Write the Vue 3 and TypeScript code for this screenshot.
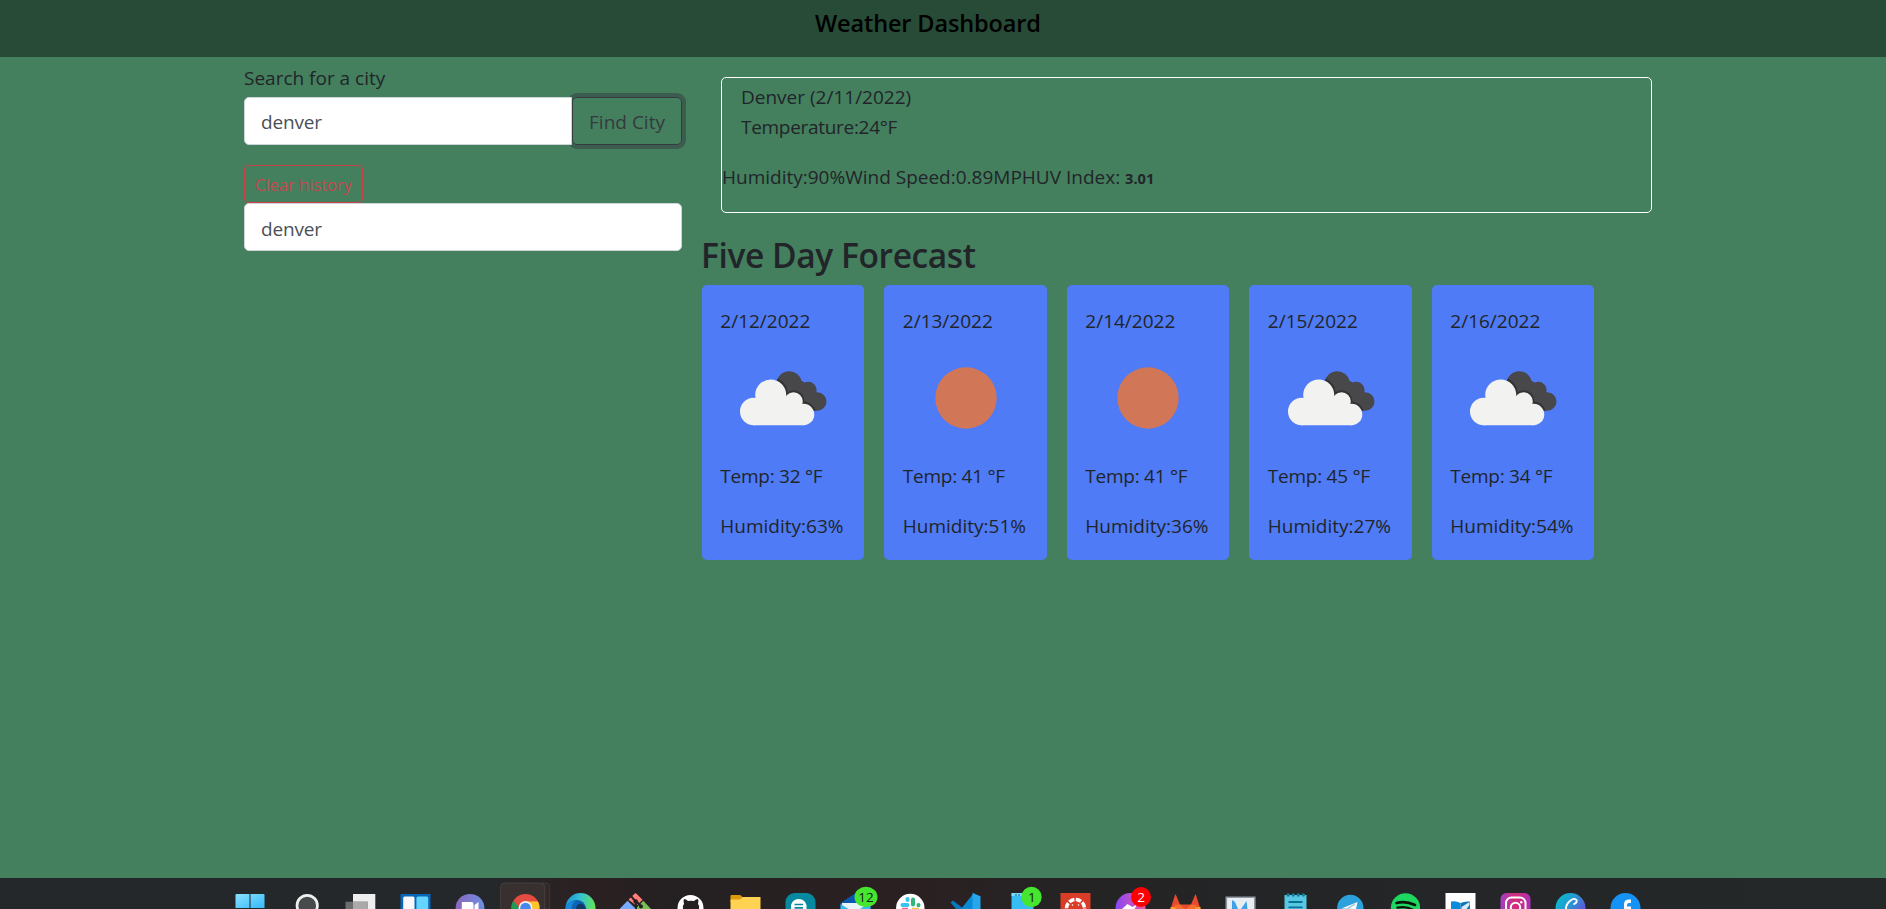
<script setup lang="ts">
import { ref } from 'vue'

interface Day {
  date: string
  icon: 'clouds' | 'sun'
  temp: number
  humidity: number
}

const city = ref('denver')
const history = ref<string[]>(['denver'])
const days: Day[] = [
  { date: '2/12/2022', icon: 'clouds', temp: 32, humidity: 63 },
  { date: '2/13/2022', icon: 'sun', temp: 41, humidity: 51 },
  { date: '2/14/2022', icon: 'sun', temp: 41, humidity: 36 },
  { date: '2/15/2022', icon: 'clouds', temp: 45, humidity: 27 },
  { date: '2/16/2022', icon: 'clouds', temp: 34, humidity: 54 },
]
</script>

<template>
  <div class="page">
    <header class="navbar"><h5>Weather Dashboard</h5></header>
    <main class="container">
      <aside class="search">
        <label for="city">Search for a city</label>
        <div class="group">
          <input id="city" v-model="city" class="field" type="text" />
          <button class="find" type="button">Find City</button>
        </div>
        <button class="clear" type="button" @click="history = []">Clear history</button>
        <div v-for="item in history" :key="item" class="field past">{{ item }}</div>
      </aside>
      <section class="results">
        <article class="today">
          <p class="line">Denver (2/11/2022)</p>
          <p class="line">Temperature:24°F</p>
          <p class="details">Humidity:90%Wind Speed:0.89MPHUV Index: <b>3.01</b></p>
        </article>
        <h3>Five Day Forecast</h3>
        <div class="forecast">
          <article v-for="day in days" :key="day.date" class="day">
            <p>{{ day.date }}</p>
            <svg v-if="day.icon === 'clouds'" class="weather" viewBox="0 0 125 125">
              <defs>
                <clipPath id="rear">
                  <circle cx="69.300" cy="48" r="12.800" /><circle cx="88.300" cy="54" r="8.300" />
                  <circle cx="97.200" cy="65.500" r="9.300" /><path d="M58 45h24l10 6 5 23.800H62z" />
                </clipPath>
              </defs>
              <g clip-path="url(#rear)">
                <path d="M50 30h60v50H50z" fill="#48484a" />
                <g fill="#333335">
                  <circle cx="51" cy="58" r="16.800" /><circle cx="73.800" cy="64.700" r="10.400" />
                  <circle cx="83.700" cy="77.600" r="12" />
                </g>
              </g>
              <g fill="#f2f2f1">
                <circle cx="33.700" cy="75.500" r="13.700" /><circle cx="50.700" cy="59" r="15.500" />
                <circle cx="73.500" cy="65.500" r="9.300" /><circle cx="83.600" cy="78.500" r="10.700" />
                <path d="M33 62h12l30 4 9 12v11.200H33z" />
              </g>
            </svg>
            <svg v-else class="weather" viewBox="0 0 125 125"><circle cx="63" cy="62" r="30.700" fill="#d27658" /></svg>
            <p class="temp">Temp: {{ day.temp }} °F</p>
            <p>Humidity:{{ day.humidity }}%</p>
          </article>
        </div>
      </section>
    </main>

    <footer class="taskbar">
      <!-- Start -->
      <svg viewBox="0 0 55 31"><defs><linearGradient id="win" x2="1" y2="1"><stop stop-color="#8be0ff" /><stop offset="1" stop-color="#35b9fb" /></linearGradient></defs><path d="M12.500 17q0-1 1-1h13v14h-14zM27.500 16h13q1 0 1 1v13h-14z" fill="url(#win)" /></svg>
      <!-- Search -->
      <svg viewBox="0 0 55 31"><circle cx="29.200" cy="27.500" r="10.200" fill="#484b4b" stroke="#f0f0f0" stroke-width="2.700" /></svg>
      <!-- Task view -->
      <svg viewBox="0 0 55 31"><path d="M20 16h22.300v15H20z" fill="#eee" /><path d="M12.500 23.700h22.300V31H12.500z" fill="#6c6d6d" /><path d="M20 23.700h14.800V31H20z" fill="#aaa" /></svg>
      <!-- Widgets -->
      <svg viewBox="0 0 55 31"><path d="M12.500 16h30v15h-30z" fill="#0867b6" /><rect x="15.200" y="18.600" width="11.300" height="17" rx="1.500" fill="#f8f8fa" /><rect x="28.400" y="18.600" width="11.800" height="17" rx="1.500" fill="#65d5ff" /></svg>
      <!-- Chat -->
      <svg viewBox="0 0 55 31"><defs><linearGradient id="chat" x2="1"><stop stop-color="#8a67bd" /><stop offset="1" stop-color="#6e8ee0" /></linearGradient></defs><circle cx="27" cy="30.300" r="14.400" fill="url(#chat)" /><path d="M18.800 24h10q1.700 0 1.700 2v5H18.800zM31.500 27l4-3v7h-4z" fill="#fff" /></svg>
      <!-- Chrome -->
      <svg viewBox="0 0 55 31"><path d="M44 5h3q4.700 0 4.700 4v22h-5z" fill="#302928" stroke="#49403f" stroke-width=".7" /><path d="M2.700 31V9q0-4 4-4h36q4 0 4 4v22" fill="#382f2f" stroke="#514847" stroke-width=".7" /><circle cx="27.500" cy="30" r="14" fill="#e44c3f" /><path d="M15.500 22.500q-4 6-.8 12H24l-3-5z" fill="#209b54" /><path d="M28 23.500h12q2.500 5 1 9H33z" fill="#fec52f" /><circle cx="27.500" cy="30" r="6.900" fill="#f2f4f7" /><circle cx="27.500" cy="30" r="5.300" fill="#4688ee" /></svg>
      <!-- Edge -->
      <svg viewBox="0 0 55 31"><defs><linearGradient id="edge" x2="1" y2=".3"><stop stop-color="#188fd9" /><stop offset=".5" stop-color="#36c1d0" /><stop offset="1" stop-color="#60e45a" /></linearGradient></defs><circle cx="27.500" cy="30" r="15" fill="url(#edge)" /><path d="M13 28q4-6 10.500-6 8 0 10 9H12.500z" fill="#0c62b5" /><path d="M23 31q0-5 5-5.500 4 1 4.500 5.500z" fill="#123b69" /><path d="M12.500 31q1-8 10-8-4 3-4 8z" fill="#168ad9" /></svg>
      <!-- Git -->
      <svg viewBox="0 0 55 31"><path d="M20.500 21.700l6-6q1-1 2 0l6 6-6 6z" fill="#ff7e7b" /><path d="M19.500 22.700l8.500 8.300H11.500z" fill="#78aaff" /><path d="M35.300 22.700L43 31H27.500z" fill="#79bf56" /><path d="M23 18l5 6v7M27 22l6 6" fill="none" stroke="#272021" stroke-width="2" /><circle cx="27.700" cy="23.500" r="2.300" fill="#272021" /><circle cx="33" cy="28.500" r="2" fill="#272021" /></svg>
      <!-- GitHub -->
      <svg viewBox="0 0 55 31"><circle cx="27.500" cy="30" r="13" fill="#fff" /><path d="M20 31q-1-3 1-5-1-3 0-5 2 0 4 2 3-.7 6 0 2-2 4-2 1 2 0 5 2 2 1 5z" fill="#242022" /></svg>
      <!-- Explorer -->
      <svg viewBox="0 0 55 31"><path d="M12.500 24v-6q0-1 1-1h8q1 0 2 1l2 2v4z" fill="#dc9b0b" /><path d="M12.500 21.500H22l3-2.500h17.500v12h-30z" fill="#ffd252" /></svg>
      <!-- Notes chat -->
      <svg viewBox="0 0 55 31"><rect x="12.500" y="15" width="30" height="30" rx="9" fill="#078a9f" /><path d="M18 31a8 8 0 1 1 15.500 0z" fill="#fff" /><path d="M21.500 26.500H30M21.500 29.800H30" stroke="#078a9f" stroke-width="1.700" /></svg>
      <!-- Mail -->
      <svg viewBox="0 0 55 31"><path d="M12.500 25L27 15.500 42.500 25v6h-30z" fill="#0858ad" /><path d="M14 25h28v6H14z" fill="#e9f4fa" /><path d="M12.500 26l8 5h-8zM42.500 24v7H32z" fill="#35b9ef" /><ellipse cx="38" cy="19" rx="11.500" ry="10.200" fill="#46e52f" /><text x="38" y="23.500" class="badge">12</text></svg>
      <!-- Slack -->
      <svg viewBox="0 0 55 31"><circle cx="27.300" cy="30" r="14.200" fill="#fff" /><g fill="none" stroke-linecap="round" stroke-width="4"><path d="M24.500 21v1M19.500 27h5" stroke="#36c5f0" /><path d="M30 21.500v5M35.500 27v.2" stroke="#2eb67d" /></g><path d="M19 30.300h6" stroke="#e5396d" /><path d="M29 30.300h7" stroke="#ecb22e" /></svg>
      <!-- VS Code -->
      <svg viewBox="0 0 55 31"><path d="M12.500 24.500l2.500-2 11 8.500h-8z" fill="#0878bd" /><path d="M23 31l12-15 1.500-1V31z" fill="#098bd4" /><path d="M34.500 15l8 3.300V31h-8z" fill="#27a6ed" /></svg>
      <!-- Calendar -->
      <svg viewBox="0 0 55 31"><path d="M18.500 15h22v16h-22z" fill="#36bdf4" /><path d="M18.500 15h22v3h-22z" fill="#70dbff" /><path d="M22 17h6" stroke="#195c79" stroke-dasharray="2 1" /><circle cx="38.500" cy="19" r="10.200" fill="#46e52f" /><text x="38.800" y="23.500" class="badge">1</text></svg>
      <!-- Canvas -->
      <svg viewBox="0 0 55 31"><path d="M12.500 15h30v16h-30z" fill="#d93d28" /><circle cx="27.500" cy="30.500" r="9" fill="none" stroke="#fff" stroke-width="3.500" stroke-dasharray="5.600 1.470" /><circle cx="24.500" cy="27" r=".8" fill="#fff" /><circle cx="30.500" cy="27" r=".8" fill="#fff" /></svg>
      <!-- Messenger -->
      <svg viewBox="0 0 55 31"><defs><linearGradient id="msg" x2="1" y2="0"><stop stop-color="#8747f7" /><stop offset="1" stop-color="#ed59a1" /></linearGradient></defs><circle cx="27.500" cy="30" r="15" fill="url(#msg)" /><path d="M19 31l5.500-5 5 3 5-3-3 5z" fill="#fff" /><circle cx="38" cy="19" r="10" fill="#f00" /><text x="38" y="23.500" class="badge light">2</text></svg>
      <!-- GitLab -->
      <svg viewBox="0 0 55 31"><path d="M12.500 31l4.500-14q.5-1.500 1 0l4 9.500h11l4-9.500q.5-1.500 1 0l4.500 14z" fill="#e64a2f" /><path d="M12.500 29l4 0L27.500 31l11-2 4 0v2h-30z" fill="#fb9c2b" /><path d="M16 27l6-.5 5 4.500h-9zM39 27l-6-.5-5 4.500h9z" fill="#f66d2b" /></svg>
      <!-- Chart -->
      <svg viewBox="0 0 55 31"><path d="M13.300 31V19.300h28.500V31" fill="#e8edf2" stroke="#8d98a3" stroke-width="1.600" /><path d="M19 31v-9l3 2 3 7zM28 31l5.500-8 1 8z" fill="#40a2e5" /></svg>
      <!-- Notepad -->
      <svg viewBox="0 0 55 31"><path d="M16.500 17h22v14h-22z" fill="#58c7e3" /><path d="M20.500 24h14M20.500 29.300h14" stroke="#087397" stroke-width="1.800" /><g fill="#167f9e"><circle v-for="n in 4" :key="n" :cx="15 + n * 5.100" cy="17" r="1.700" /></g></svg>
      <!-- Telegram -->
      <svg viewBox="0 0 55 31"><circle cx="27.300" cy="30" r="13.200" fill="#2ba1de" /><path d="M18.500 30.500L34.500 24l-1.500 7z" fill="#fff" /><path d="M24 31l8-5" stroke="#a9ccdf" stroke-width="1.500" /></svg>
      <!-- Spotify -->
      <svg viewBox="0 0 55 31"><circle cx="27.500" cy="29.800" r="14.600" fill="#1ed760" /><g fill="none" stroke="#06140a" stroke-linecap="round"><path d="M18.500 25q9-2.500 18.500 2" stroke-width="2.700" /><path d="M19.500 29.700q8-2 15.500 2" stroke-width="2.300" /></g></svg>
      <!-- Reader -->
      <svg viewBox="0 0 55 31"><path d="M12.500 15h30v16h-30z" fill="#fff" /><path d="M18 23.500q5-1 9.500 1.500v6H18z" fill="#078cdc" /><path d="M27.500 25q4-2 9.500-1.500V31h-9.500z" fill="#1275b3" /><path d="M28.500 31v-2l8-5v3l-3 4z" fill="#d8edf9" /></svg>
      <!-- Instagram -->
      <svg viewBox="0 0 55 31"><defs><linearGradient id="insta" x2="1"><stop stop-color="#a33fc2" /><stop offset=".5" stop-color="#d72c77" /><stop offset="1" stop-color="#ac30b6" /></linearGradient></defs><rect x="12.500" y="15" width="30" height="30" rx="6" fill="url(#insta)" /><g fill="none" stroke="#fff" stroke-width="2"><rect x="18" y="19.500" width="19.500" height="19.500" rx="5.500" /><circle cx="27.500" cy="29.500" r="4.700" /></g><circle cx="33.300" cy="24.200" r="1.200" fill="#fff" /></svg>
      <!-- Canva -->
      <svg viewBox="0 0 55 31"><defs><linearGradient id="canva" x2="1" y2=".7"><stop stop-color="#02c4cc" /><stop offset=".5" stop-color="#2798d2" /><stop offset="1" stop-color="#7145dc" /></linearGradient></defs><circle cx="27.500" cy="30" r="15" fill="url(#canva)" /><path d="M31 26q3.500-1.500 2.500-4-2-2.500-6 .5-5 4-4.500 9" fill="none" stroke="#fff" stroke-width="1.900" stroke-linecap="round" /></svg>
      <!-- Facebook -->
      <svg viewBox="0 0 55 31"><circle cx="27.500" cy="30" r="15" fill="#1592f6" /><path d="M26 31v-4.500q0-5 5-5h2V25h-2q-2 0-2 2v1.500h4V31z" fill="#fff" /></svg>
    </footer>
  </div>
</template>

<style>
html, body { margin: 0; overflow: hidden; }
</style>

<style scoped>
* { box-sizing: border-box; }
.page {
  display: flex;
  flex-direction: column;
  width: 1886px;
  height: 909px;
  overflow: hidden;
  background: #447f5e;
  color: #212529;
  font: 400 19px/30px "Open Sans", "Noto Sans", sans-serif;
}
p, h3, h5 { margin: 0; }
.navbar { height: 57px; padding: 8px 0 0 815px; background: #274b37; color: #000; }
h5 { font-size: 23.500px; font-weight: 600; line-height: 30px; letter-spacing: -.13px; }
.container { display: flex; flex: 1; align-items: flex-start; gap: 20px; padding-left: 244px; }
.search { width: 438px; padding-top: 6px; }
label { display: block; height: 34px; }
.group { display: flex; height: 48px; }
.field {
  display: block;
  height: 48px;
  padding: 1px 16px 0;
  border: 1px solid #ced4da;
  border-radius: 5px;
  background: #fff;
  color: #495057;
  font: inherit;
  line-height: 48px;
  letter-spacing: -.15px;
  outline: none;
}
#city { position: relative; z-index: 1; width: 328px; border-radius: 5px 0 0 5px; }
button { background: transparent; font: inherit; letter-spacing: inherit; }
.find {
  width: 110px;
  padding: 1px 0 0;
  border: 1px solid #343a40;
  border-radius: 5px;
  color: #343a40;
  box-shadow: 0 0 0 4px rgba(52, 58, 64, .5);
}
.clear {
  display: block;
  width: 119px;
  height: 38px;
  margin-top: 20px;
  padding: 1px 0 0;
  border: 1px solid #c74249;
  border-radius: 4px;
  color: #cb4650;
  font-size: 16.500px;
}
.results { width: 950px; padding-top: 20px; }
.today { height: 136px; margin-left: 19px; padding-top: 4px; border: 1px solid #fff; border-radius: 5px; }
.line { padding-left: 19px; }
.line + .line { letter-spacing: -.3px; }
.details { margin-top: 20px; }
b { font-size: 14.600px; font-weight: 700; }
h3 { height: 72px; margin-left: -1px; padding-top: 21px; font-size: 33.500px; font-weight: 600; line-height: 42px; letter-spacing: -.4px; }
.forecast { display: flex; gap: 20px; margin-left: -.4px; }
.day {
  display: flex;
  flex-direction: column;
  width: 162.500px;
  height: 275px;
  padding: 21px 0 0 18.700px;
  border-radius: 5px;
  background: #4f7bf6;
  white-space: nowrap;
}
.weather { flex: none; width: 125px; height: 125px; }
.temp { letter-spacing: -.25px; }
.day p:last-child { margin-top: 20px; }
.taskbar { display: flex; height: 31px; padding-left: 223px; background: linear-gradient(90deg, #24282a 15%, #25282a 26%, #2b2021 31%, #242022 36%, #2b2021 48%, #242425 58%, #242829); }
.taskbar svg { flex: none; width: 55px; height: 31px; }
.badge { fill: #102010; font: 400 13.500px "Open Sans", sans-serif; text-anchor: middle; }
.light { fill: #fff; }
</style>
